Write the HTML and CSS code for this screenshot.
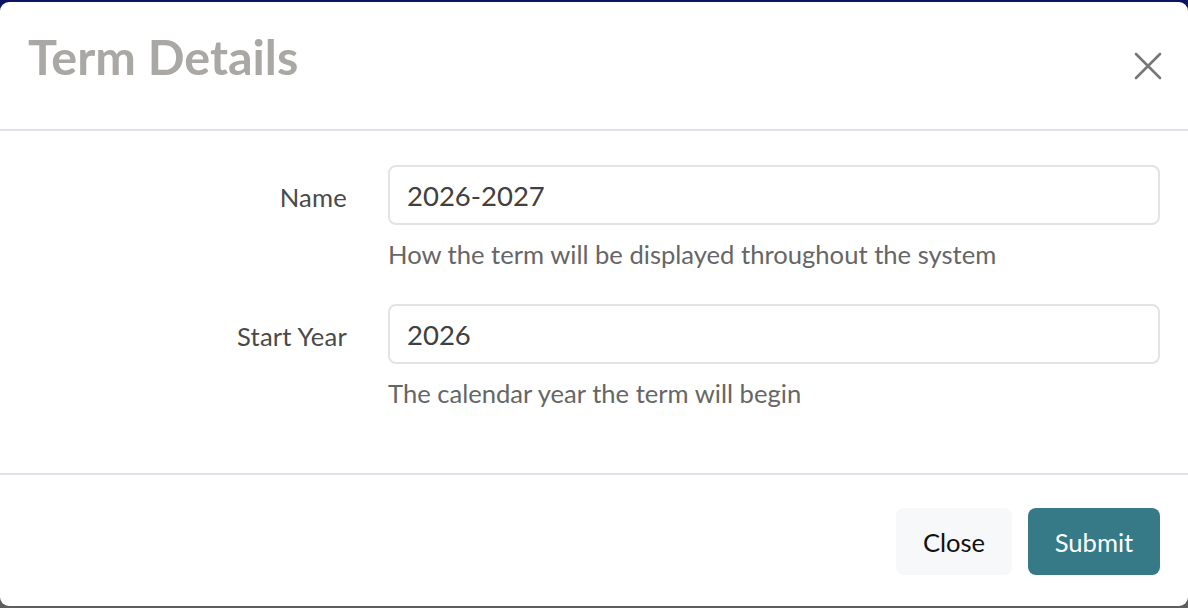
FILE: index.html
```html
<!DOCTYPE html>
<html lang="en">
<head>
<meta charset="utf-8">
<title>Term Details</title>
<link rel="stylesheet" href="styles.css">
</head>
<body>
<div class="modal">
  <div class="modal-header">
    <h1 class="modal-title">Term Details</h1>
    <button class="close-x" aria-label="Close">
      <svg width="28" height="28" viewBox="0 0 28 28"><path d="M2 2L26 26M26 2L2 26" stroke="#777" stroke-width="2.6" stroke-linecap="round"/></svg>
    </button>
  </div>
  <div class="modal-body">
    <div class="form-row">
      <label class="form-label">Name</label>
      <div class="form-field">
        <div class="input">2026-2027</div>
        <div class="help">How the term will be displayed throughout the system</div>
      </div>
    </div>
    <div class="form-row">
      <label class="form-label">Start Year</label>
      <div class="form-field">
        <div class="input">2026</div>
        <div class="help">The calendar year the term will begin</div>
      </div>
    </div>
  </div>
  <div class="modal-footer">
    <button class="btn btn-light">Close</button>
    <button class="btn btn-primary">Submit</button>
  </div>
</div>
</body>
</html>
```
FILE: styles.css
```css
html, body {
  margin: 0;
  padding: 0;
  height: 100%;
}
body {
  background: linear-gradient(to bottom, #0a1460 0%, #0a1460 50%, #5e5e5e 50%, #5e5e5e 100%);
  padding: 2px 0;
  box-sizing: border-box;
  font-family: Lato, "Noto Sans", sans-serif;
  overflow: hidden;
}
.modal {
  background: #fff;
  border-radius: 9px;
  height: 604px;
  display: flex;
  flex-direction: column;
}
.modal-header {
  height: 129px;
  flex: none;
  box-sizing: border-box;
  border-bottom: 2px solid #dfe2e6;
  display: flex;
  align-items: center;
  justify-content: space-between;
  padding: 0 26px 0 28px;
}
.modal-title {
  margin: 0;
  font-size: 48.5px;
  line-height: 1.2;
  font-weight: 700;
  color: #aaa8a5;
  margin-top: -18px;
}
.close-x {
  background: none;
  border: 0;
  padding: 0;
  display: flex;
  margin-top: 0;
}
.modal-body {
  height: 344px;
  flex: none;
  box-sizing: border-box;
  padding: 34px 28px 0 0;
  border-bottom: 2px solid #dfe2e6;
  display: flex;
  flex-direction: column;
  gap: 31px;
}
.form-row {
  display: grid;
  grid-template-columns: 347px 1fr;
  column-gap: 41px;
}
.form-label {
  text-align: right;
  font-size: 25.6px;
  letter-spacing: 0.2px;
  color: #4a4a4a;
  line-height: 64px;
}
.input {
  height: 60px;
  box-sizing: border-box;
  border: 2px solid #e1e3e7;
  border-radius: 8px;
  padding: 0 17px;
  font-size: 27.5px;
  color: #404040;
  display: flex;
  align-items: center;
}
.help {
  margin-top: 10px;
  font-size: 25.6px;
  line-height: 38px;
  color: #666;
}
.modal-footer {
  flex: 1;
  display: flex;
  justify-content: flex-end;
  align-items: center;
  gap: 16px;
  padding: 2px 28px 0 0;
}
.btn {
  height: 67px;
  border: 0;
  border-radius: 8px;
  font-family: Lato, "Noto Sans", sans-serif;
  font-size: 25.6px;
  padding: 0;
}
.btn-light {
  background: #f7f8fa;
  color: #111;
  width: 116px;
}
.btn-primary {
  background: #367987;
  color: #fff;
  width: 132px;
}
```
